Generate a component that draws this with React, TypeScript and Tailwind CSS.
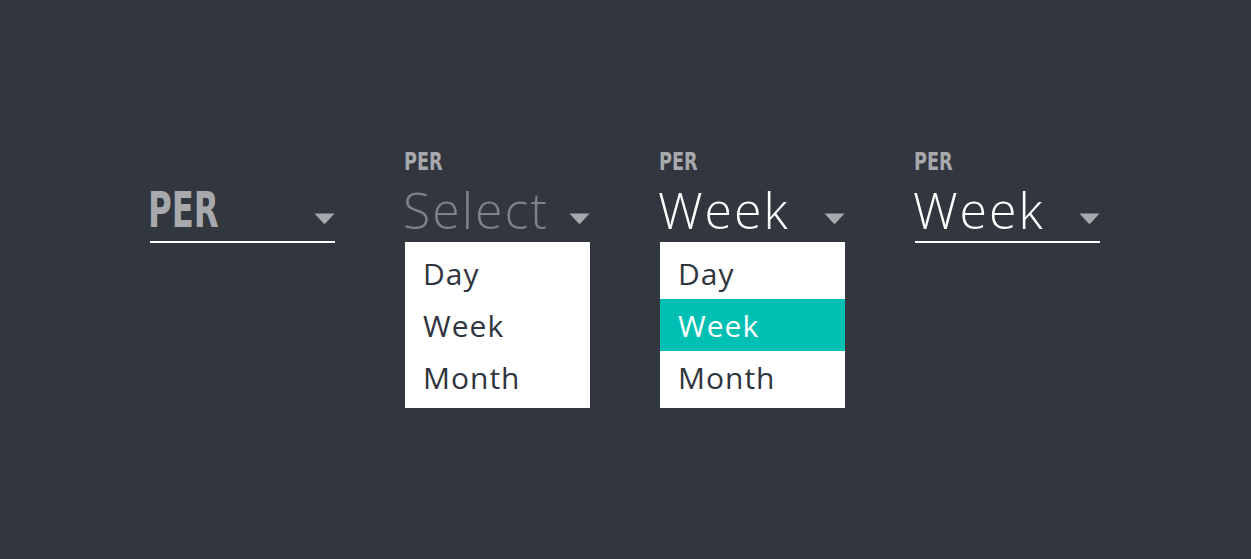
import React from "react";

const Arrow = () => (
  <svg width="21" height="11" viewBox="0 0 21 11" className="shrink-0 mb-[17px]">
    <path d="M0.5 0.5 H20.5 L11.6 10.2 Q10.5 11.2 9.4 10.2 Z" fill="#a7a9ad" />
  </svg>
);

const Label = () => (
  <div
    className="h-[24px] -ml-[1px] text-[24px] leading-[24px] font-bold text-[#a7a9ad] origin-left scale-x-[0.82]"
    style={{ fontFamily: '"Liberation Sans Narrow", "DejaVu Sans Condensed", sans-serif' }}
  >
    PER
  </div>
);

const Options = ({ active }: { active?: string }) => (
  <div className="mt-px w-full bg-white py-[5px]">
    {["Day", "Week", "Month"].map((o) => (
      <div
        key={o}
        className={
          "h-[52px] pl-[18px] flex items-center text-[30px] tracking-[1px] " +
          (o === active ? "bg-[#00bfb3] text-white" : "text-[#30353e]")
        }
      >
        {o}
      </div>
    ))}
  </div>
);

const Column = ({
  label,
  value,
  muted,
  underline,
  open,
  active,
}: {
  label?: boolean;
  value: string;
  muted?: boolean;
  underline?: boolean;
  open?: boolean;
  active?: string;
}) => (
  <div className="w-[185px] flex flex-col">
    <div className="h-[24px]">{label && <Label />}</div>
    <div className="mt-[6px] h-[61px] flex items-end justify-between">
      {value === "PER" ? (
        <span
          className="h-[61px] text-[50px] leading-[61px] font-bold text-[#a7a9ad] origin-left scale-x-[0.72] -ml-[2px]"
          style={{ fontFamily: '"Liberation Sans Narrow", "DejaVu Sans Condensed", sans-serif' }}
        >
          PER
        </span>
      ) : (
        <span
          className={
            "h-[61px] text-[50px] leading-[60px] font-light tracking-[2px] -ml-[2px] " +
            (muted ? "text-[#7f8389]" : "text-white")
          }
        >
          {value}
        </span>
      )}
      <Arrow />
    </div>
    {underline && <div className="h-[2px] bg-white" />}
    {open && <Options active={active} />}
  </div>
);

export default function App() {
  return (
    <div
      className="min-h-screen h-[559px] bg-[#31363f] flex justify-start items-start gap-[70px] pt-[150px] pl-[150px]"
      style={{ fontFamily: '"Open Sans", sans-serif' }}
    >
      <Column value="PER" underline />
      <Column label value="Select" muted open />
      <Column label value="Week" open active="Week" />
      <Column label value="Week" underline />
    </div>
  );
}
